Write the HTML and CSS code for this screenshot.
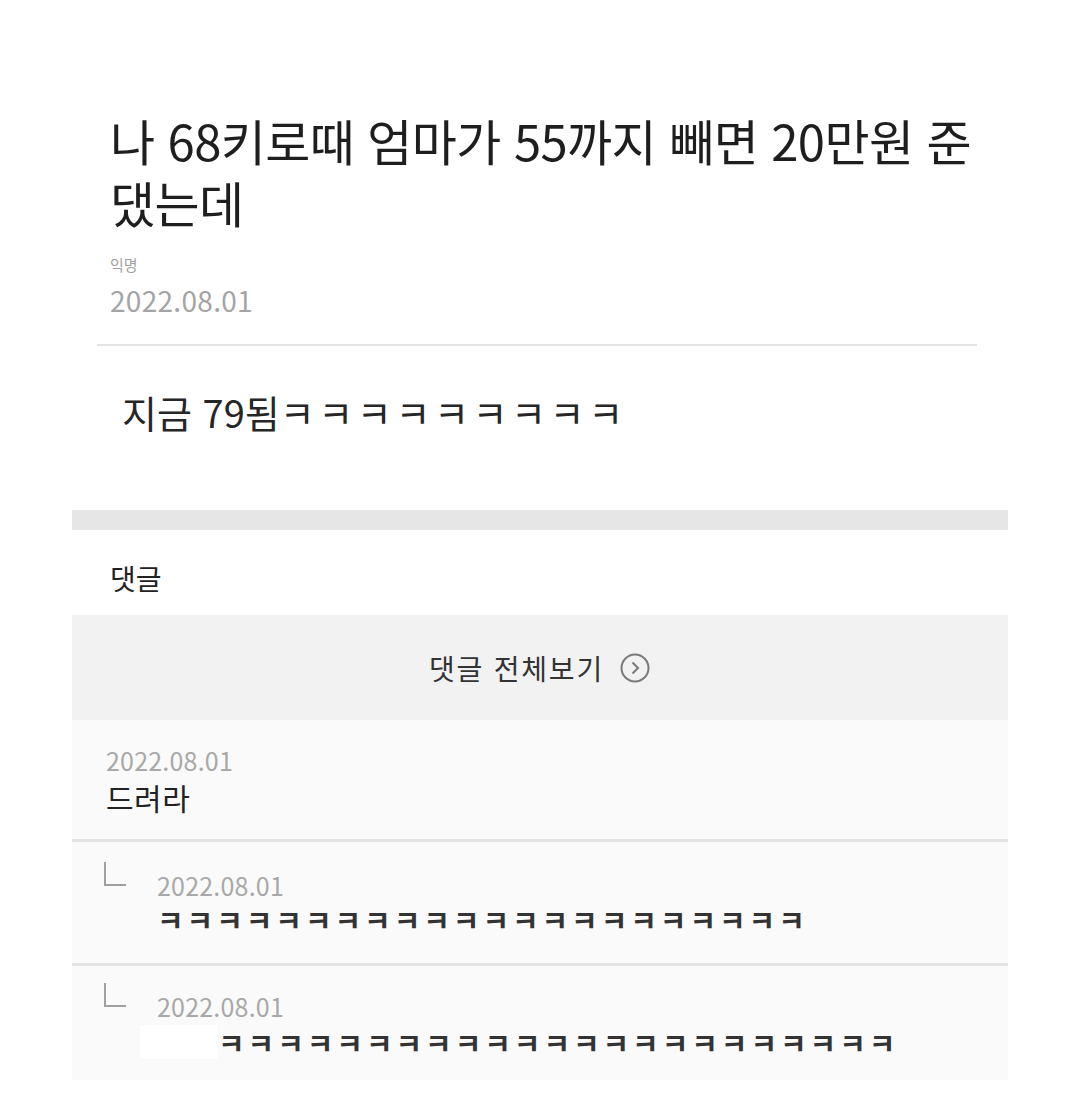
FILE: index.html
```html
<!DOCTYPE html>
<html lang="ko">
<head>
<meta charset="utf-8">
<link rel="stylesheet" href="styles.css">
</head>
<body>
<div class="page">
  <section class="article">
    <header class="head">
      <h1 class="title">나 68키로때 엄마가 55까지 빼면 20만원 준 댔는데</h1>
      <div class="author">익명</div>
      <div class="date">2022.08.01</div>
    </header>
    <div class="content">지금 79됨<span class="laugh">ㅋㅋㅋㅋㅋㅋㅋㅋㅋ</span></div>
  </section>
  <section class="comments">
    <div class="band"></div>
    <h2 class="ctitle">댓글</h2>
    <div class="viewall">
      <span>댓글 전체보기</span>
      <svg class="arrow" width="32" height="32" viewBox="0 0 32 32"><circle cx="16" cy="16" r="13.5" fill="none" stroke="#7a7a7a" stroke-width="2"/><path d="M13.5 10.5 L19 16 L13.5 21.5" fill="none" stroke="#7a7a7a" stroke-width="2"/></svg>
    </div>
    <div class="comment">
      <div class="cdate">2022.08.01</div>
      <div class="ctext">드려라</div>
    </div>
    <div class="comment reply">
      <span class="corner"></span>
      <div class="rbody">
        <div class="cdate">2022.08.01</div>
        <div class="rtext">ㅋㅋㅋㅋㅋㅋㅋㅋㅋㅋㅋㅋㅋㅋㅋㅋㅋㅋㅋㅋㅋㅋ</div>
      </div>
    </div>
    <div class="comment reply last">
      <span class="corner"></span>
      <div class="rbody">
        <div class="cdate">2022.08.01</div>
        <div class="rtext"><span class="mask"></span>ㅋㅋㅋㅋㅋㅋㅋㅋㅋㅋㅋㅋㅋㅋㅋㅋㅋㅋㅋㅋㅋㅋㅋ</div>
      </div>
    </div>
  </section>
</div>
</body>
</html>
```

FILE: styles.css
```css
html, body {
  margin: 0;
  padding: 0;
  background: #fff;
}
body {
  font-family: "Noto Sans CJK KR", "Noto Sans", sans-serif;
  color: #222;
}
.page {
  width: 1080px;
  height: 1109px;
  padding-top: 109px;
  box-sizing: border-box;
}
.article {
  margin: 0 103px 0 97px;
}
.head {
  padding: 0 0 24px 13px;
  border-bottom: 2px solid #e4e4e4;
}
.title {
  margin: 0;
  font-size: 49px;
  font-weight: 400;
  line-height: 62px;
  letter-spacing: -0.6px;
  color: #1e1e1e;
}
.author {
  margin-top: 21px;
  font-size: 15px;
  line-height: 22px;
  color: #a0a0a0;
}
.date {
  margin-top: 4px;
  font-size: 28px;
  line-height: 40px;
  color: #a4a4a4;
  letter-spacing: 0.3px;
}
.content {
  padding: 39px 0 0 25px;
  height: 164px;
  box-sizing: border-box;
  font-size: 38px;
  line-height: 54px;
  color: #262626;
}
.laugh {
  letter-spacing: 3.6px;
}
.comments {
  margin: 0 72px;
}
.band {
  height: 20px;
  background: #e6e6e6;
}
.ctitle {
  margin: 0;
  padding: 28px 0 0 38px;
  height: 85px;
  box-sizing: border-box;
  font-size: 28px;
  font-weight: 400;
  line-height: 40px;
  color: #222;
}
.viewall {
  height: 105px;
  background: #f2f2f2;
  display: flex;
  align-items: center;
  justify-content: center;
  gap: 15px;
  font-size: 28px;
  letter-spacing: 1.8px;
  color: #333;
}
.arrow {
  flex: none;
}
.comment {
  background: #fafafa;
  padding: 23px 0 0 34px;
  height: 122px;
  box-sizing: border-box;
  border-bottom: 3px solid #e3e3e3;
}
.cdate {
  font-size: 25px;
  line-height: 34px;
  color: #a8a8a8;
  letter-spacing: 0.2px;
}
.ctext {
  font-size: 30px;
  line-height: 40px;
  letter-spacing: 0.5px;
  color: #222;
}
.reply {
  display: flex;
  padding: 20px 0 0 32px;
  height: 124px;
}
.reply.last {
  border-bottom: 0;
  padding-top: 17px;
  height: 114px;
}
.corner {
  flex: none;
  width: 20px;
  height: 22px;
  border-left: 2px solid #a0a0a0;
  border-bottom: 2px solid #a0a0a0;
  margin-right: 31px;
}
.rbody {
  padding-top: 6px;
}
.rtext {
  font-size: 29px;
  line-height: 34px;
  font-weight: 700;
  color: #333;
  letter-spacing: 2.9px;
  display: flex;
  align-items: center;
}
.last .rtext {
  line-height: 38px;
}
.mask {
  flex: none;
  width: 78px;
  height: 34px;
  background: #fff;
  margin-left: -17px;
}
```
